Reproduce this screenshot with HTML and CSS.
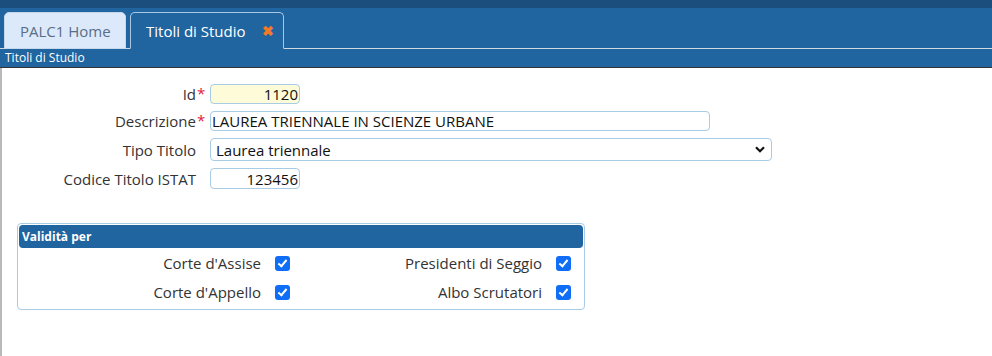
FILE: index.html
```html
<!DOCTYPE html>
<html lang="it">
<head>
    <meta charset="UTF-8">
    <meta name="viewport" content="width=device-width, initial-scale=1.0">
    <title>Titoli di Studio</title>
    <link rel="stylesheet" href="styles.css">
</head>
<body>
    <div class="topbar"></div>
    <div class="tabs">
        <div class="tab">PALC1 Home</div>
        <div class="tab active">Titoli di Studio <span class="close">&#10006;</span></div>
        <div class="tab-rest"></div>
    </div>
    <div class="title-bar">Titoli di Studio</div>

    <div class="page">
        <div class="form">
            <label class="lbl">Id<span class="req">*</span></label>
            <input type="text" class="inp short num key" value="1120">

            <label class="lbl">Descrizione<span class="req">*</span></label>
            <input type="text" class="inp long" value="LAUREA TRIENNALE IN SCIENZE URBANE">

            <label class="lbl">Tipo Titolo</label>
            <div class="select-wrap">
                <select class="inp sel">
                    <option>Laurea triennale</option>
                </select>
                <svg class="chevron" width="10" height="7" viewBox="0 0 10 7">
                    <path d="M1 1.2 L5 5.2 L9 1.2" fill="none" stroke="#111" stroke-width="2.2"/>
                </svg>
            </div>

            <label class="lbl">Codice Titolo ISTAT</label>
            <input type="text" class="inp short num tall" value="123456">
        </div>

        <div class="group">
            <div class="group-head">Validità per</div>
            <div class="group-body">
                <div class="chk-row"><span>Corte d'Assise</span><input type="checkbox" class="chk" checked></div>
                <div class="chk-row"><span>Presidenti di Seggio</span><input type="checkbox" class="chk" checked></div>
                <div class="chk-row"><span>Corte d'Appello</span><input type="checkbox" class="chk" checked></div>
                <div class="chk-row"><span>Albo Scrutatori</span><input type="checkbox" class="chk" checked></div>
            </div>
        </div>
    </div>
</body>
</html>
```

FILE: styles.css
```css
body { margin: 0; font-family: "Open Sans", "Noto Sans", sans-serif; font-size: 15px; color: #333; background: #fff; }
.topbar { height: 8px; background: #1b4e7d; }
.tabs { display: flex; align-items: flex-end; height: 41px; box-sizing: border-box; background: #2064a0; padding-left: 4px; border-bottom: 1px solid #d0d8e0; }
.tab { height: 37px; box-sizing: border-box; padding: 0 15px; margin-right: 4px; margin-bottom: -1px; display: flex; align-items: center; white-space: nowrap; font-size: 15px; border: 1px solid #c6d8ec; border-radius: 5px 5px 0 0; background: #dce9fa; color: #596d86; width: 122px; }
.tab.active { background: #2064a0; color: #fff; border-color: #a9c6e3; border-bottom: 1px solid #2064a0; width: 154px; }
.close { color: #f07a2a; font-size: 14px; font-weight: bold; margin-left: auto; margin-right: -6px; }
.tab-rest { flex: 1; }
.title-bar { height: 18px; line-height: 18px; background: #2064a0; color: #fff; font-size: 12px; padding-left: 5px; border-bottom: 1px solid #333; }
.page { border-left: 2px solid #b9b9b9; height: 288px; box-sizing: border-box; padding: 16px 0 0 15px; }
.form { display: grid; grid-template-columns: 179px auto; column-gap: 14px; row-gap: 7px; align-items: center; justify-items: start; }
.lbl { justify-self: end; position: relative; }
.req { position: absolute; left: 100%; top: -1px; color: #e0203c; padding-left: 1px; }
.inp { font-family: inherit; font-size: 15px; color: #111; border: 1px solid #a8cbe6; border-radius: 4px; height: 20px; box-sizing: border-box; padding: 0 1px; background: #fff; }
.short { width: 90px; }
.long { width: 500px; }
.num { text-align: right; }
.key { background: #fdfbd8; }
.tall { height: 21px; }
.select-wrap { position: relative; }
.sel { width: 562px; height: 23px; appearance: none; padding-left: 5px; }
.chevron { position: absolute; right: 7px; top: 8px; }
.group { margin-top: 34px; width: 568px; box-sizing: border-box; border: 1px solid #a8cbe6; border-radius: 4px; padding: 1px 1px 9px; }
.group-head { height: 23px; line-height: 23px; background: #2064a0; color: #fff; font-size: 12px; font-weight: bold; padding-left: 3px; border-radius: 4px; }
.group-body { display: grid; grid-template-columns: 281px 281px; row-gap: 13px; padding-top: 7px; }
.chk-row { display: flex; justify-content: flex-end; align-items: center; gap: 14px; padding-right: 10px; height: 16px; }
.chk { appearance: none; margin: 0; width: 15px; height: 15px; border-radius: 3px; background: #0f6ef5; position: relative; }
.chk:checked::after { content: ""; position: absolute; left: 5px; top: 2px; width: 3px; height: 7px; border: solid #fff; border-width: 0 2px 2px 0; transform: rotate(40deg); }
```
